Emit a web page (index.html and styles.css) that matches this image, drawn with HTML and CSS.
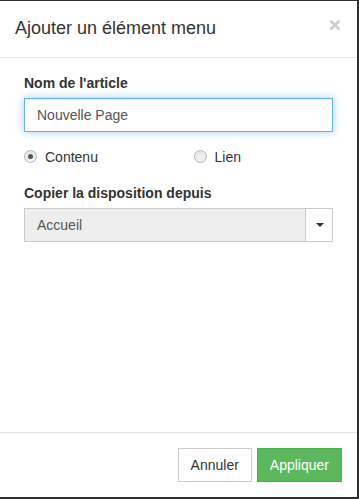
FILE: index.html
```html
<!DOCTYPE html>
<html lang="fr">
<head>
    <meta charset="UTF-8">
    <meta name="viewport" content="width=device-width, initial-scale=1.0">
    <title>Ajouter un élément menu</title>
    <link rel="stylesheet" href="styles.css">
</head>
<body>
    <div class="modal">
        <div class="modal-header">
            <button type="button" class="close">&times;</button>
            <h4 class="modal-title">Ajouter un élément menu</h4>
        </div>
        <div class="modal-body">
            <div class="form-group">
                <label class="field-label">Nom de l'article</label>
                <input type="text" class="form-control" value="Nouvelle Page">
            </div>
            <div class="row">
                <label class="radio checked"><span class="dot"></span>Contenu</label>
                <label class="radio"><span class="dot"></span>Lien</label>
            </div>
            <div class="form-group">
                <label class="field-label">Copier la disposition depuis</label>
                <div class="select">
                    <span class="select-text">Accueil</span>
                    <span class="select-btn"><span class="caret"></span></span>
                </div>
            </div>
        </div>
        <div class="modal-footer">
            <button type="button" class="btn btn-default">Annuler</button>
            <button type="button" class="btn btn-success">Appliquer</button>
        </div>
    </div>
</body>
</html>
```

FILE: styles.css
```css
body {
    margin: 0;
    padding-top: 1px;
    background-color: #2e2e2e;
    font-family: "Liberation Sans", Arial, sans-serif;
    font-size: 14px;
    line-height: 20px;
    color: #333;
}
.modal {
    width: 357px;
    height: 496px;
    background-color: #fff;
    display: flex;
    flex-direction: column;
    box-sizing: border-box;
}
.modal-header {
    padding: 15px;
    border-bottom: 1px solid #e5e5e5;
}
.modal-title {
    margin: 0;
    font-size: 18px;
    font-weight: normal;
    line-height: 25.7px;
}
.close {
    float: right;
    margin-top: -2px;
    margin-right: 1px;
    padding: 0;
    border: 0;
    background: none;
    font-family: "Liberation Sans", Arial, sans-serif;
    font-size: 21px;
    font-weight: bold;
    line-height: 1;
    color: #ccc;
}
.modal-body {
    flex: 1;
    padding: 15px 24px;
}
.form-group {
    margin-bottom: 15px;
}
.field-label {
    display: block;
    font-weight: bold;
    margin-bottom: 5px;
}
.form-control {
    display: block;
    width: 100%;
    height: 34px;
    box-sizing: border-box;
    padding: 6px 12px;
    font-family: inherit;
    font-size: 14px;
    color: #555;
    border: 1px solid #66afe9;
    outline: 0;
    box-shadow: inset 0 1px 1px rgba(0, 0, 0, .075), 0 0 8px rgba(102, 175, 233, .6);
}
.row {
    display: grid;
    grid-template-columns: 1fr 1fr;
    column-gap: 30px;
    margin-bottom: 16px;
}
.radio {
    display: flex;
    align-items: center;
}
.dot {
    width: 11px;
    height: 11px;
    margin: 0 8px 0 0;
    border: 1px solid #b4b4b4;
    border-radius: 50%;
    background: linear-gradient(#e6e6e6, #f4f4f4);
    position: relative;
}
.checked .dot::after {
    content: "";
    position: absolute;
    left: 3px;
    top: 3px;
    width: 5px;
    height: 5px;
    border-radius: 50%;
    background-color: #555;
}
.select {
    display: flex;
    height: 34px;
    box-sizing: border-box;
    border: 1px solid #ccc;
    background-color: #eee;
    color: #555;
}
.select-text {
    flex: 1;
    padding: 6px 12px;
}
.select-btn {
    width: 26px;
    border-left: 1px solid #ccc;
    background-color: #fff;
    display: flex;
    align-items: center;
    justify-content: center;
}
.caret {
    width: 0;
    height: 0;
    border-top: 4px solid #333;
    border-left: 4px solid transparent;
    border-right: 4px solid transparent;
    margin-left: 2px;
}
.modal-footer {
    padding: 15px;
    border-top: 1px solid #e5e5e5;
    display: flex;
    justify-content: flex-end;
    gap: 5px;
}
.btn {
    height: 34px;
    padding: 6px 12px;
    font-family: inherit;
    font-size: 14px;
    line-height: 20px;
    border: 1px solid #ccc;
    border-radius: 0;
    background-color: #fff;
    color: #333;
}
.btn-success {
    background-color: #5cb85c;
    border-color: #4cae4c;
    color: #fff;
}
```
